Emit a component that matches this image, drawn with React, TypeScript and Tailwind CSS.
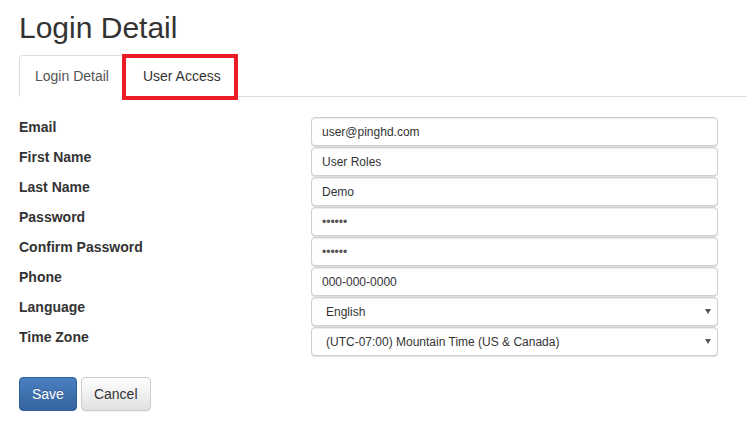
import React, { useState } from 'react';

const font = "font-['Liberation_Sans',Arial,sans-serif]";

interface Field {
  label: string;
  value: string;
  type?: 'text' | 'password' | 'select';
  options?: string[];
}

const fields: Field[] = [
  { label: 'Email', value: 'user@pinghd.com' },
  { label: 'First Name', value: 'User Roles' },
  { label: 'Last Name', value: 'Demo' },
  { label: 'Password', value: 'secret', type: 'password' },
  { label: 'Confirm Password', value: 'secret', type: 'password' },
  { label: 'Phone', value: '000-000-0000' },
  { label: 'Language', value: 'English', type: 'select', options: ['English', 'Spanish', 'French'] },
  {
    label: 'Time Zone',
    value: '(UTC-07:00) Mountain Time (US & Canada)',
    type: 'select',
    options: ['(UTC-07:00) Mountain Time (US & Canada)', '(UTC-08:00) Pacific Time (US & Canada)'],
  },
];

const inputClass =
  'block w-full h-[29px] mb-px rounded-[4px] border border-[#cfcfcf] bg-white text-[12px] text-[#333] outline-none shadow-[inset_0_1px_1px_rgba(0,0,0,0.075),0_1px_0_rgba(0,0,0,0.12)]';

function FieldInput({ field }: { field: Field }) {
  const [value, setValue] = useState(field.value);

  if (field.type === 'select') {
    return (
      <div className="relative">
        <select
          value={value}
          onChange={(e) => setValue(e.target.value)}
          className={`${inputClass} appearance-none pl-[14px] pr-8`}
        >
          {field.options?.map((o) => (
            <option key={o} value={o}>
              {o}
            </option>
          ))}
        </select>
        <svg className="absolute right-[7px] top-[12px] pointer-events-none" width="6" height="5" viewBox="0 0 6 5">
          <path d="M0 0 H6 L3 5 Z" fill="#555" />
        </svg>
      </div>
    );
  }

  return (
    <input
      type={field.type === 'password' ? 'password' : 'text'}
      value={value}
      onChange={(e) => setValue(e.target.value)}
      className={`${inputClass} px-[10px] ${field.type === 'password' ? 'text-[7px] text-[#555]' : ''}`}
    />
  );
}

export default function App() {
  const [tab, setTab] = useState('login');

  return (
    <div className={`${font} min-h-[426px] bg-white pl-[19px] pt-[11px] text-[#333]`}>
      <h1 className="text-[30px] leading-[33px] font-normal mb-[11px]">Login Detail</h1>

      <ul className="flex border-b border-[#ddd] text-[14px] leading-[20px]">
        <li className="-mb-px mr-[2px]">
          <button
            onClick={() => setTab('login')}
            className={`block px-[15px] py-[10px] rounded-t-[4px] border ${
              tab === 'login' ? 'border-[#ddd] border-b-white bg-white text-[#555]' : 'border-transparent text-[#333]'
            }`}
          >
            Login Detail
          </button>
        </li>
        <li className="-mb-px relative">
          <button
            onClick={() => setTab('access')}
            className={`block px-[15px] py-[10px] rounded-t-[4px] border ${
              tab === 'access' ? 'border-[#ddd] border-b-white bg-white text-[#555]' : 'border-transparent text-[#333]'
            }`}
          >
            User Access
          </button>
          <div className="absolute -left-[5px] -top-[1px] -right-[1px] -bottom-[3px] border-4 border-[#ec1c24] pointer-events-none" />
        </li>
      </ul>

      <div className="mt-[20px] grid grid-cols-[292px_407px]">
        {fields.map((f) => (
          <React.Fragment key={f.label}>
            <label className="text-[14px] leading-[20px] font-bold">{f.label}</label>
            <FieldInput field={f} />
          </React.Fragment>
        ))}
      </div>

      <div className="mt-[20px] flex gap-[4px] text-[14px] leading-[20px]">
        <button className="h-[34px] px-[12px] rounded-[4px] border border-[#2e5f9a] bg-gradient-to-b from-[#4a7fc1] to-[#35649f] text-white [text-shadow:0_-1px_0_rgba(0,0,0,0.2)]">
          Save
        </button>
        <button className="h-[34px] px-[12px] rounded-[4px] border border-[#ccc] bg-gradient-to-b from-white to-[#e0e0e0] text-[#333] shadow-[0_1px_1px_rgba(0,0,0,0.05)]">
          Cancel
        </button>
      </div>
    </div>
  );
}
